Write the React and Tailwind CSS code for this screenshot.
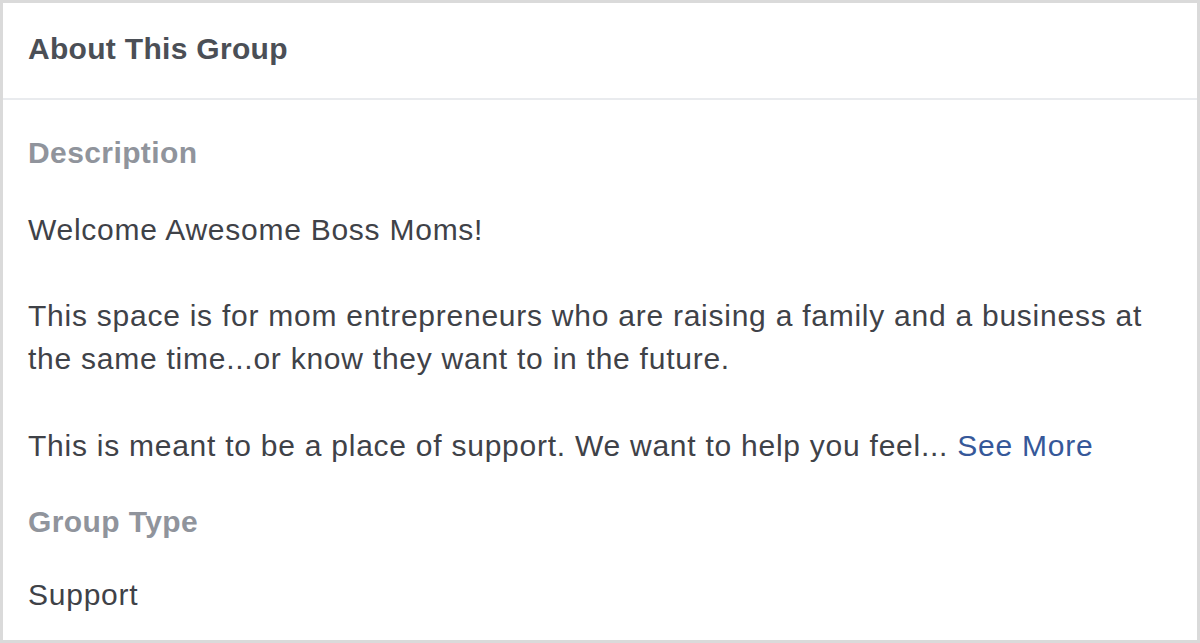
export default function App() {
  return (
    <div className="w-[1200px] h-[643px] bg-white border-[3px] border-[#dadada] box-border overflow-hidden" style={{ fontFamily: '"Liberation Sans", Arial, sans-serif' }}>
      <div className="px-[25px] pt-[24px] pb-[28px] border-b-2 border-[#e9ebee]">
        <h2 className="text-[30px] leading-[43px] font-bold text-[#4b4f56] tracking-[0.3px]">About This Group</h2>
      </div>
      <div className="px-[25px] pt-[31px]">
        <div className="text-[30px] leading-[43px] font-bold text-[#90949c] tracking-[0.4px]">Description</div>
        <div className="mt-[34px] text-[30px] leading-[43px] text-[#3f4248] tracking-[0.75px]">
          <p>Welcome Awesome Boss Moms!</p>
          <p className="mt-[43px]">This space is for mom entrepreneurs who are raising a family and a business at the same time...or know they want to in the future.</p>
          <p className="mt-[44px]">This is meant to be a place of support. We want to help you feel... <span className="text-[#365899]">See More</span></p>
        </div>
        <div className="mt-[33px] text-[30px] leading-[43px] font-bold text-[#90949c] tracking-[0.4px]">Group Type</div>
        <div className="mt-[30px] text-[30px] leading-[43px] text-[#3f4248] tracking-[0.75px]">Support</div>
      </div>
    </div>
  );
}
